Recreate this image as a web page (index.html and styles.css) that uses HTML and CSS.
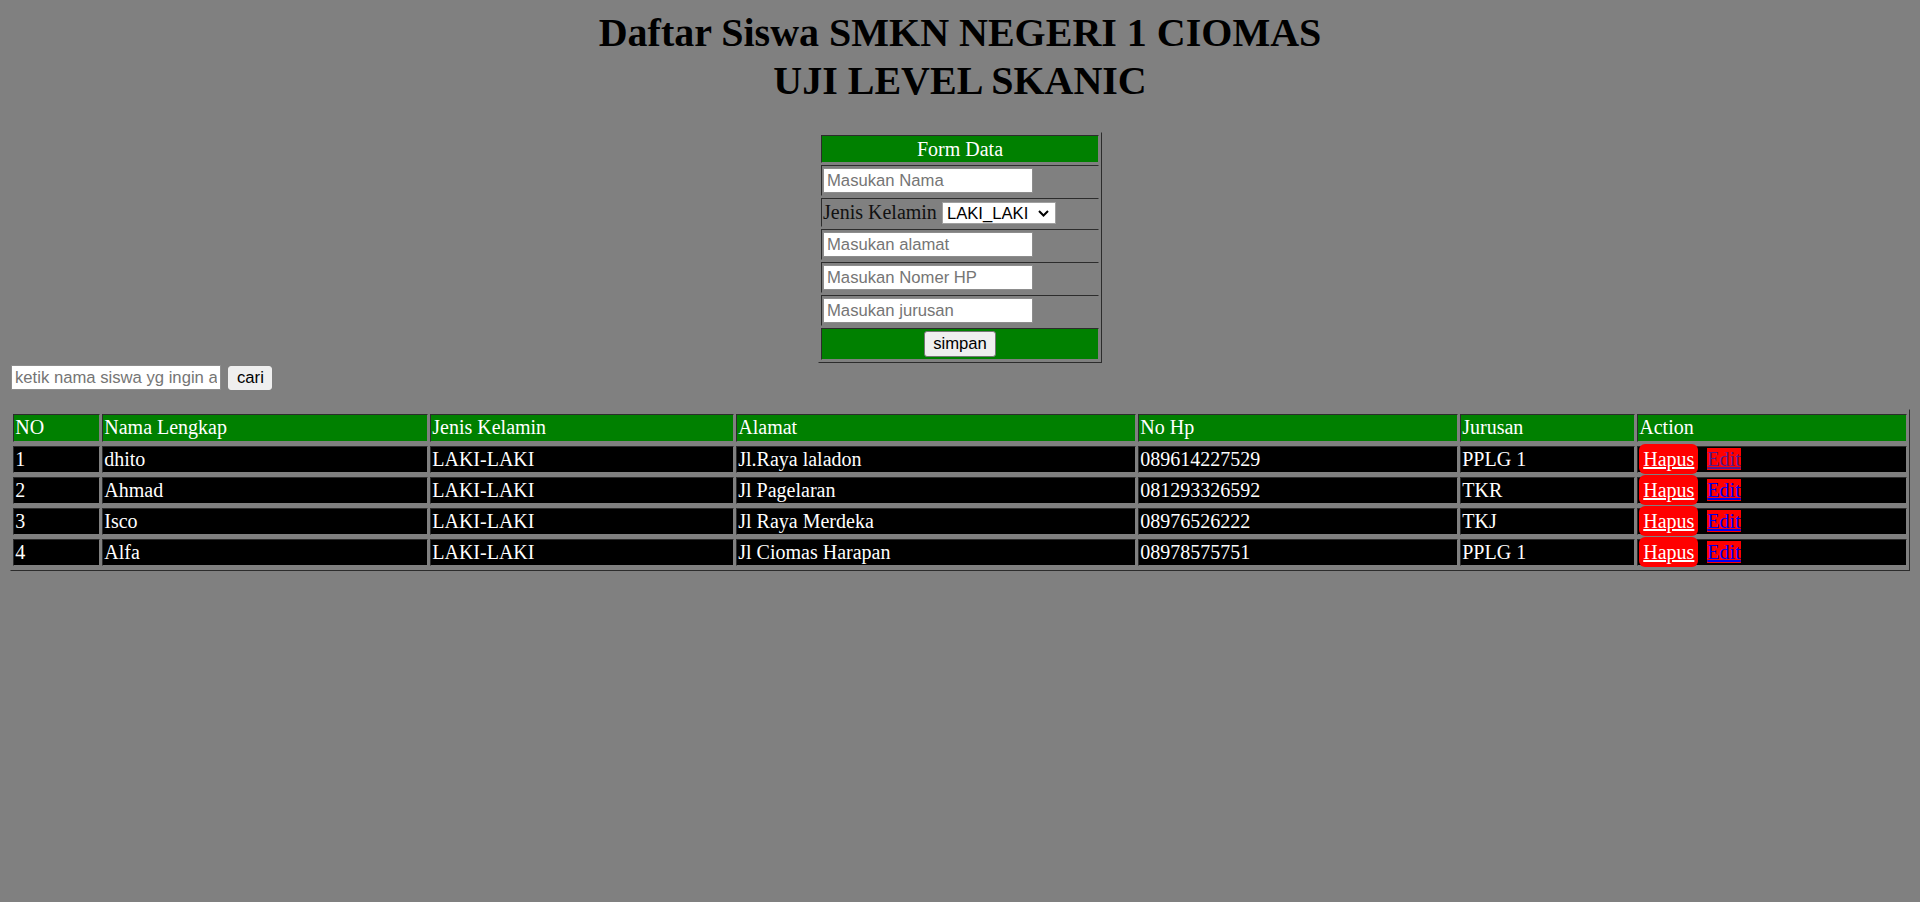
FILE: index.html
```html
<!DOCTYPE html>
<html lang="id">
<head>
<meta charset="utf-8">
<title>Daftar Siswa</title>
<link rel="stylesheet" href="styles.css">
</head>
<body>
<h1 class="title">Daftar Siswa SMKN NEGERI 1 CIOMAS<br>UJI LEVEL SKANIC</h1>

<table class="form">
  <tr><td class="form-head">Form Data</td></tr>
  <tr><td class="form-row"><input class="field" type="text" placeholder="Masukan Nama"></td></tr>
  <tr><td class="form-row form-row-select">Jenis Kelamin <span class="select-wrap"><select class="select"><option>LAKI_LAKI</option><option>PEREMPUAN</option></select><svg class="chevron" width="11" height="7" viewBox="0 0 11 7"><path d="M1 1 L5.5 5.5 L10 1" fill="none" stroke="#000" stroke-width="2"/></svg></span></td></tr>
  <tr><td class="form-row"><input class="field" type="text" placeholder="Masukan alamat"></td></tr>
  <tr><td class="form-row"><input class="field" type="text" placeholder="Masukan Nomer HP"></td></tr>
  <tr><td class="form-row"><input class="field" type="text" placeholder="Masukan jurusan"></td></tr>
  <tr><td class="form-foot"><button class="btn btn-save" type="button">simpan</button></td></tr>
</table>

<div class="search">
  <input class="field" type="text" placeholder="ketik nama siswa yg ingin anda cari">
  <button class="btn btn-find" type="button">cari</button>
</div>

<table class="data">
  <colgroup>
    <col class="c-no"><col class="c-nama"><col class="c-jk"><col class="c-alamat"><col class="c-hp"><col class="c-jur"><col class="c-act">
  </colgroup>
  <thead>
    <tr><th>NO</th><th>Nama Lengkap</th><th>Jenis Kelamin</th><th>Alamat</th><th>No Hp</th><th>Jurusan</th><th>Action</th></tr>
  </thead>
  <tbody>
    <tr><td>1</td><td>dhito</td><td>LAKI-LAKI</td><td>Jl.Raya laladon</td><td>089614227529</td><td>PPLG 1</td><td><a class="btn-del" href="#">Hapus</a> <a class="btn-edit visited" href="#">Edit</a></td></tr>
    <tr><td>2</td><td>Ahmad</td><td>LAKI-LAKI</td><td>Jl Pagelaran</td><td>081293326592</td><td>TKR</td><td><a class="btn-del" href="#">Hapus</a> <a class="btn-edit" href="#">Edit</a></td></tr>
    <tr><td>3</td><td>Isco</td><td>LAKI-LAKI</td><td>Jl Raya Merdeka</td><td>08976526222</td><td>TKJ</td><td><a class="btn-del" href="#">Hapus</a> <a class="btn-edit" href="#">Edit</a></td></tr>
    <tr><td>4</td><td>Alfa</td><td>LAKI-LAKI</td><td>Jl Ciomas Harapan</td><td>08978575751</td><td>PPLG 1</td><td><a class="btn-del" href="#">Hapus</a> <a class="btn-edit" href="#">Edit</a></td></tr>
  </tbody>
</table>
</body>
</html>
```

FILE: styles.css
```css
html, body {
  background: #808080;
}
body {
  margin: 10px;
  font-family: "Liberation Serif", "Times New Roman", serif;
  font-size: 20px;
  color: #000;
}

.title {
  margin: -1px 0 27px;
  font-size: 40px;
  line-height: 48px;
  font-weight: bold;
  text-align: center;
}

/* ---------- form ---------- */
.form {
  width: 284px;
  margin: 0 auto;
  border: 1px outset gray;
  border-spacing: 2px;
}
.form td {
  border: 1px inset gray;
  padding: 0 1px;
  line-height: 23px;
  vertical-align: middle;
  box-sizing: border-box;
}
.form-head {
  height: 28px;
  background: #008000;
  color: #fff;
  text-align: center;
}
.form-row {
  height: 31px;
}
.form-row-select {
  height: 29px;
  color: #111;
}
.form-foot {
  height: 32px;
  background: #008000;
  text-align: center;
}

.field {
  box-sizing: border-box;
  width: 210px;
  height: 25px;
  margin: 0;
  padding: 1px 3px;
  border: 1px solid #8d8d8d;
  background: #fff;
  font-family: "Liberation Sans", Arial, sans-serif;
  font-size: 16.667px;
  color: #000;
  vertical-align: middle;
}
.field::placeholder {
  color: #757575;
}

.select-wrap {
  position: relative;
  display: inline-block;
  vertical-align: baseline;
  line-height: 0;
}
.select {
  appearance: none;
  -webkit-appearance: none;
  box-sizing: border-box;
  width: 114px;
  height: 22px;
  margin: 0;
  padding: 0 0 0 4px;
  border: 1px solid #a0a0a0;
  border-radius: 0;
  background: #fff;
  font-family: "Liberation Sans", Arial, sans-serif;
  font-size: 16.667px;
  line-height: normal;
  color: #000;
  display: inline-block;
  vertical-align: baseline;
}
.chevron {
  position: absolute;
  right: 7px;
  top: 8px;
  pointer-events: none;
}

.btn {
  box-sizing: border-box;
  margin: 0;
  border: 1px solid #767676;
  border-radius: 3px;
  background: #efefef;
  font-family: "Liberation Sans", Arial, sans-serif;
  font-size: 16.667px;
  color: #000;
  padding: 0 8px;
  vertical-align: middle;
}
.btn-save {
  width: 72px;
  height: 26px;
}

/* ---------- search ---------- */
.search {
  display: flex;
  align-items: center;
  gap: 7px;
  margin: 2px 0 0 1px;
}
.btn-find {
  width: 44px;
  height: 24px;
  border-color: #efefef;
}

/* ---------- data table ---------- */
.data {
  width: 100%;
  margin-top: 19px;
  table-layout: fixed;
  border: 1px outset gray;
  border-spacing: 2px 4px;
}
.c-no { width: 87px; }
.c-nama { width: 326px; }
.c-jk { width: 304px; }
.c-alamat { width: 400px; }
.c-hp { width: 320px; }
.c-jur { width: 175px; }
.c-act { width: 270px; }

.data th,
.data td {
  border: 1px inset gray;
  padding: 1px 1.25px;
  line-height: 23px;
  text-align: left;
  font-weight: normal;
  color: #fff;
  white-space: nowrap;
  overflow: visible;
}
.data th {
  background: #008000;
  padding-bottom: 2px;
}
.data td {
  background: #000;
}

.btn-del {
  background: #ff0000;
  color: #fff;
  padding: 4px;
  border-radius: 6px;
  margin-right: 4px;
}
.btn-edit {
  background: #ff0000;
  color: #0000ee;
}
.btn-edit.visited {
  color: #551a8b;
}
```
